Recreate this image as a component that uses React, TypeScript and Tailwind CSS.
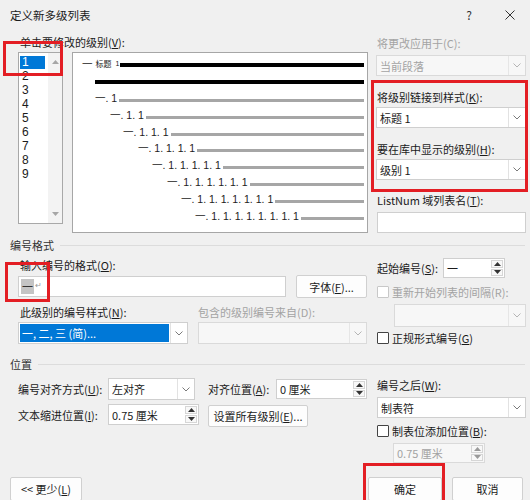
import React from "react";

const Chevron = ({ c = "#7a7a7a" }: { c?: string }) => (
  <svg width="8" height="5" viewBox="0 0 8 5">
    <path d="M0.5 0.5 L4 4 L7.5 0.5" fill="none" stroke={c} strokeWidth="1" />
  </svg>
);

const Tri = ({ up, c = "#333" }: { up?: boolean; c?: string }) => (
  <svg width="7" height="4" viewBox="0 0 7 4">
    <path d={up ? "M0 4 L3.5 0 L7 4 Z" : "M0 0 L3.5 4 L7 0 Z"} fill={c} />
  </svg>
);

function Select({
  cls,
  text,
  disabled,
  hl,
}: {
  cls: string;
  text?: string;
  disabled?: boolean;
  hl?: boolean;
}) {
  return (
    <div
      className={`flex border ${
        disabled
          ? "border-[#dadada] bg-[#f7f7f7] text-[#a3a3a3]"
          : "border-[#cfcfcf] bg-white text-[#1b1b1b]"
      } ${cls}`}
    >
      <div className="flex-1 flex items-center min-w-0 p-[1px]">
        {hl ? (
          <div className="h-full w-full bg-[#0078d7] text-white flex items-center pl-[2px]">
            {text}
          </div>
        ) : (
          <span className="pl-[2px]">{text}</span>
        )}
      </div>
      <div
        className={`w-[17px] flex items-center justify-center border-l ${
          disabled ? "border-[#e6e6e6]" : "border-[#e2e2e2]"
        }`}
      >
        <Chevron c={disabled ? "#b5b5b5" : "#7a7a7a"} />
      </div>
    </div>
  );
}

function Spin({ cls, text, disabled }: { cls: string; text: string; disabled?: boolean }) {
  return (
    <div
      className={`flex border ${
        disabled ? "border-[#dadada] bg-[#f7f7f7] text-[#a3a3a3]" : "border-[#cfcfcf] bg-white"
      } ${cls}`}
    >
      <div className="flex-1 flex items-center pl-[3px]">{text}</div>
      <div className="w-[14px] flex flex-col p-[1px] gap-[1px]">
        <div className="flex-1 flex items-center justify-center border border-[#d6d6d6] bg-[#f8f8f8]">
          <Tri up c={disabled ? "#9a9a9a" : "#333"} />
        </div>
        <div className="flex-1 flex items-center justify-center border border-[#d6d6d6] bg-[#f8f8f8]">
          <Tri c={disabled ? "#9a9a9a" : "#333"} />
        </div>
      </div>
    </div>
  );
}

function Check({ children, disabled, cls }: { children: React.ReactNode; disabled?: boolean; cls: string }) {
  return (
    <div className={`flex items-center h-[14px] ${cls}`}>
      <div
        className={`w-[12px] h-[12px] border bg-white rounded-[1px] ${
          disabled ? "border-[#c8c8c8]" : "border-[#444]"
        }`}
      />
      <span className={`ml-[3px] ${disabled ? "text-[#a3a3a3]" : ""}`}>{children}</span>
    </div>
  );
}

function Btn({ cls, children }: { cls: string; children: React.ReactNode }) {
  return (
    <div
      className={`flex items-center justify-center bg-[#fdfdfd] border border-[#d0d0d0] rounded-[2px] ${cls}`}
    >
      {children}
    </div>
  );
}

const rows = [
  { pl: "pl-[22px]", t: "一. 1" },
  { pl: "pl-[37px]", t: "一. 1. 1" },
  { pl: "pl-[50px]", t: "一. 1. 1. 1" },
  { pl: "pl-[65px]", t: "一. 1. 1. 1. 1" },
  { pl: "pl-[79px]", t: "一. 1. 1. 1. 1. 1" },
  { pl: "pl-[94px]", t: "一. 1. 1. 1. 1. 1. 1" },
  { pl: "pl-[108px]", t: "一. 1. 1. 1. 1. 1. 1. 1" },
  { pl: "pl-[122px]", t: "一. 1. 1. 1. 1. 1. 1. 1. 1" },
];

export default function App() {
  return (
    <div className="relative w-[530px] h-[500px] overflow-hidden bg-[#f0f0f0] text-[11px] leading-[14px] text-[#1b1b1b] font-['Noto_Sans_CJK_SC',sans-serif]">
      {/* title bar */}
      <div className="flex items-center h-[30px] pl-[10px] pr-[15px]">
        <span className="text-[11.5px]">定义新多级列表</span>
        <span className="ml-auto text-[12px] text-[#333] mr-[33px]">?</span>
        <svg width="10" height="10" viewBox="0 0 10 10">
          <path d="M0.5 0.5 L9.5 9.5 M9.5 0.5 L0.5 9.5" stroke="#333" strokeWidth="1" />
        </svg>
      </div>

      {/* top section */}
      <div className="flex">
        <div className="pl-[18px] pt-[5px] w-[368px]">
          <div className="pl-[2px] h-[14px]">
            单击要修改的级别(<u>V</u>):
          </div>
          <div className="flex items-start mt-[3px]">
            {/* list box */}
            <div className="w-[45px] h-[172px] border border-[#a8a8a8] bg-white flex">
              <div className="flex-1 pt-[2px] pl-[1px] text-[12px] leading-[13px] font-['Liberation_Sans',sans-serif]">
                {["1", "2", "3", "4", "5", "6", "7", "8", "9"].map((n, i) => (
                  <div key={n} className="h-[14px] flex items-center">
                    {i === 0 ? (
                      <div className="w-[25px] h-[13px] bg-[#0078d7] text-white pl-[2px] flex items-center">
                        {n}
                      </div>
                    ) : (
                      <div className="pl-[2px]">{n}</div>
                    )}
                  </div>
                ))}
              </div>
              <div className="w-[14px] bg-[#f3f3f3] flex flex-col justify-between items-center py-[7px]">
                <Tri up c="#a6a6a6" />
                <Tri c="#a6a6a6" />
              </div>
            </div>
            {/* preview */}
            <div className="ml-[9px] w-[296px] h-[181px] border border-[#a6a6a6] bg-white pt-[3px] flex flex-col font-['Liberation_Sans','Noto_Sans_CJK_SC',sans-serif] text-[10.5px] text-[#222]">
              <div className="h-[16.8px] flex items-center pl-[9px] pr-[3px]">
                <span>一</span>
                <span className="ml-[3px] text-[8px] font-['Noto_Sans_CJK_SC',sans-serif]">标题</span>
                <span className="ml-[4px] text-[7px]">1</span>
                <div className="flex-1 ml-[1px] h-[4px] bg-black mt-[2px]" />
              </div>
              <div className="h-[16.8px] flex items-center pl-[22px] pr-[3px]">
                <div className="flex-1 h-[4px] bg-black mt-[2px]" />
              </div>
              {rows.map((r) => (
                <div key={r.pl} className={`h-[16.8px] flex items-center pr-[3px] ${r.pl}`}>
                  <span className="whitespace-pre">{r.t}</span>
                  <div className="flex-1 ml-[2px] h-[3px] bg-[#a6a6a6] mt-[5px]" />
                </div>
              ))}
            </div>
          </div>
        </div>

        <div className="ml-[8px] w-[150px] pt-[6px] flex flex-col">
          <div className="h-[14px] pl-[1px] text-[#a3a3a3]">将更改应用于(C):</div>
          <Select cls="mt-[5px] h-[21px]" text="当前段落" disabled />
          <div className="mt-[14px] h-[14px] pl-[1px]">
            将级别链接到样式(<u>K</u>):
          </div>
          <Select cls="mt-[3px] h-[21px]" text="标题 1" />
          <div className="mt-[14px] h-[14px] pl-[1px]">
            要在库中显示的级别(<u>H</u>):
          </div>
          <Select cls="mt-[3px] h-[21px]" text="级别 1" />
          <div className="mt-[13px] h-[14px] pl-[1px]">
            ListNum 域列表名(<u>T</u>):
          </div>
          <div className="mt-[5px] h-[21px] border border-[#cfcfcf] bg-white ml-[1px]" />
        </div>
      </div>

      {/* 编号格式 header */}
      <div className="mt-[5px] h-[14px] flex items-center pl-[10px] pr-[5px]">
        <span className="text-[#333]">编号格式</span>
        <div className="flex-1 h-px bg-[#dcdcdc] ml-[6px]" />
      </div>

      {/* numbering format section */}
      <div className="flex">
        <div className="pl-[18px] w-[368px] pt-[6px]">
          <div className="h-[14px] pl-[2px]">
            输入编号的格式(<u>O</u>):
          </div>
          <div className="mt-[3px] h-[23px] flex items-center">
            <div className="w-[268px] h-[21px] border border-[#cfcfcf] bg-white flex items-center pl-[2px]">
              <span className="bg-[#c4c4c4] text-[#333] px-[1px] leading-[15px]">一</span>
              <span className="text-[8px] text-[#9a9a9a] ml-[1px] -mt-[4px]">↵</span>
            </div>
            <Btn cls="ml-[10px] w-[71px] h-[23px]">
              字体(<u>F</u>)...
            </Btn>
          </div>
          <div className="mt-[7px] h-[14px] flex">
            <span className="w-[180px] pl-[2px]">
              此级别的编号样式(<u>N</u>):
            </span>
            <span className="text-[#a3a3a3]">包含的级别编号来自(D):</span>
          </div>
          <div className="mt-[3px] flex">
            <Select cls="w-[170px] h-[22px]" text="一, 二, 三 (简)..." hl />
            <Select cls="ml-[10px] w-[169px] h-[22px]" disabled />
          </div>
        </div>
        <div className="ml-[9px] w-[149px] pt-[6px] flex flex-col">
          <div className="h-[20px] flex items-center">
            <span>
              起始编号(<u>S</u>):
            </span>
            <Spin cls="ml-auto mr-[21px] w-[62px] h-[20px]" text="一" />
          </div>
          <Check cls="mt-[7px]" disabled>
            重新开始列表的间隔(R):
          </Check>
          <Select cls="ml-[17px] mt-[5px] h-[23px]" disabled />
          <Check cls="mt-[4px]">
            正规形式编号(<u>G</u>)
          </Check>
        </div>
      </div>

      {/* 位置 header */}
      <div className="mt-[12px] h-[14px] flex items-center pl-[10px] pr-[5px]">
        <span className="text-[#333]">位置</span>
        <div className="flex-1 h-px bg-[#dcdcdc] ml-[6px]" />
      </div>

      {/* position section */}
      <div className="flex">
        <div className="pl-[18px] w-[199px]">
          <div className="mt-[7px] h-[22px] flex items-center">
            <span className="w-[90px]">
              编号对齐方式(<u>U</u>):
            </span>
            <Select cls="w-[87px] h-[22px]" text="左对齐" />
          </div>
          <div className="mt-[4px] h-[21px] flex items-center">
            <span className="w-[90px]">
              文本缩进位置(<u>I</u>):
            </span>
            <Spin cls="w-[91px] h-[21px]" text="0.75 厘米" />
          </div>
        </div>
        <div className="ml-[9px] w-[160px]">
          <div className="mt-[7px] h-[22px] flex items-center">
            <span className="w-[68px]">
              对齐位置(<u>A</u>):
            </span>
            <Spin cls="w-[91px] h-[20px]" text="0 厘米" />
          </div>
          <Btn cls="mt-[5px] w-[100px] h-[22px]">
            设置所有级别(<u>E</u>)...
          </Btn>
        </div>
        <div className="ml-[9px] w-[149px] flex flex-col">
          <div className="mt-[7px] h-[14px]">
            编号之后(<u>W</u>):
          </div>
          <Select cls="mt-[5px] h-[21px]" text="制表符" />
          <Check cls="mt-[6px]">
            制表位添加位置(<u>B</u>):
          </Check>
          <Spin cls="ml-[16px] mt-[5px] w-[92px] h-[20px]" text="0.75 厘米" disabled />
        </div>
      </div>

      {/* bottom buttons */}
      <div className="mt-[14px] flex">
        <Btn cls="ml-[10px] w-[72px] h-[24px]">
          {"<< 更少("}
          <u>L</u>)
        </Btn>
        <Btn cls="ml-auto w-[74px] h-[24px] border-[#2b86d0]">确定</Btn>
        <Btn cls="ml-[10px] mr-[7px] w-[71px] h-[24px]">取消</Btn>
      </div>

      {/* red highlight boxes (overlay) */}
      <div className="absolute left-[3px] top-[41px] w-[60px] h-[35px] border-[3px] border-[#e31e24]" />
      <div className="absolute left-[371px] top-[80px] w-[157px] h-[112px] border-[3px] border-[#e31e24]" />
      <div className="absolute left-[5px] top-[262px] w-[45px] h-[40px] border-[3px] border-[#e31e24]" />
      <div className="absolute left-[363px] top-[463px] w-[82px] h-[42px] border-[3px] border-[#e31e24]" />
    </div>
  );
}
